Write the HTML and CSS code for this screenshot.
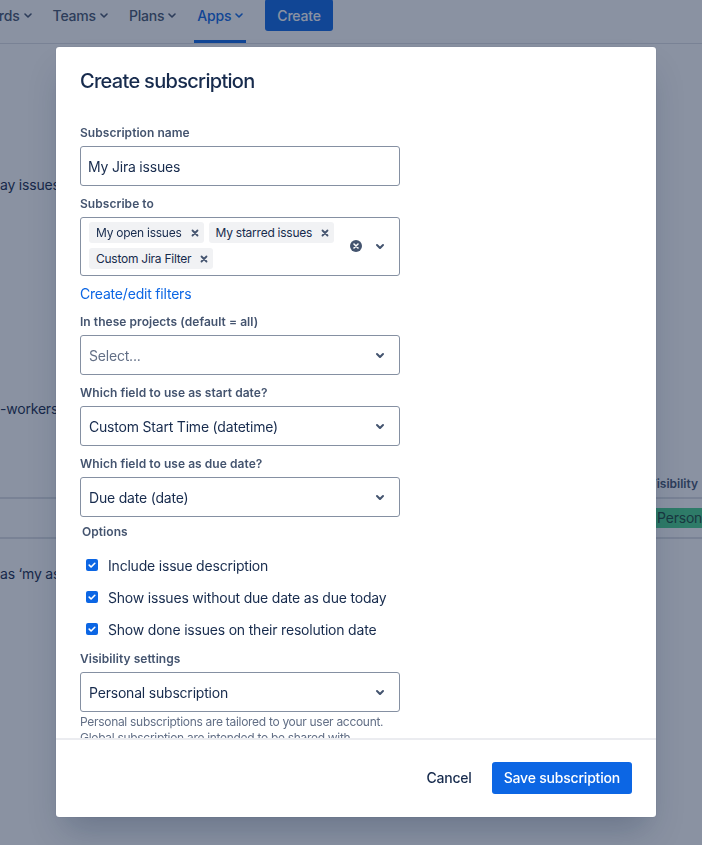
FILE: index.html
```html
<!DOCTYPE html>
<html lang="en">
<head>
<meta charset="utf-8">
<title>Calendar subscriptions</title>
<link rel="stylesheet" href="styles.css">
</head>
<body>
<div class="page">
  <header class="topnav">
    <nav class="nav-items">
      <a class="nav-item">Dashboards <svg class="nav-chev" viewBox="0 0 8 5" width="8" height="5"><path d="M1 1l3 3 3-3"/></svg></a>
      <a class="nav-item">Teams <svg class="nav-chev" viewBox="0 0 8 5" width="8" height="5"><path d="M1 1l3 3 3-3"/></svg></a>
      <a class="nav-item">Plans <svg class="nav-chev" viewBox="0 0 8 5" width="8" height="5"><path d="M1 1l3 3 3-3"/></svg></a>
      <a class="nav-item is-active">Apps <svg class="nav-chev" viewBox="0 0 8 5" width="8" height="5"><path d="M1 1l3 3 3-3"/></svg></a>
      <button class="create-btn" type="button">Create</button>
    </nav>
  </header>

  <main class="content">
    <p class="note note-1"><span class="lead">Get a daily digest of overdue and tod</span>ay issues</p>
    <p class="note note-2"><span class="lead">Share one calendar with your co</span>-workers</p>
    <div class="table">
      <div class="table-row table-head"><div></div><div class="th">Visibility</div></div>
      <div class="table-row table-body"><div></div><div><span class="lozenge">Personal</span></div></div>
    </div>
    <p class="note note-3"><span class="lead">Subscribe to issues you flagged</span>as ‘my assigned’</p>
  </main>
</div>

<div class="blanket"></div>

<section class="modal" role="dialog" aria-labelledby="modal-title">
  <header class="modal-header">
    <h1 class="modal-title" id="modal-title">Create subscription</h1>
  </header>

  <div class="modal-body">
    <form class="form">
      <div class="field">
        <label class="field-label" for="sub-name">Subscription name</label>
        <input class="textfield" id="sub-name" type="text" value="My Jira issues">
      </div>

      <div class="field">
        <div class="field-label">Subscribe to</div>
        <div class="multiselect">
          <div class="tags">
            <span class="tag"><span class="tag-text">My open issues</span><span class="tag-remove"><svg viewBox="0 0 8 8" width="8" height="8"><path d="M1.5 1.5l5 5M6.5 1.5l-5 5"/></svg></span></span>
            <span class="tag"><span class="tag-text">My starred issues</span><span class="tag-remove"><svg viewBox="0 0 8 8" width="8" height="8"><path d="M1.5 1.5l5 5M6.5 1.5l-5 5"/></svg></span></span>
            <span class="tag"><span class="tag-text">Custom Jira Filter</span><span class="tag-remove"><svg viewBox="0 0 8 8" width="8" height="8"><path d="M1.5 1.5l5 5M6.5 1.5l-5 5"/></svg></span></span>
          </div>
          <div class="indicators">
            <span class="indicator"><svg class="clear-icon" viewBox="0 0 12 12" width="12" height="12"><circle cx="6" cy="6" r="6"/><path d="M4 4l4 4M8 4l-4 4"/></svg></span>
            <span class="indicator"><svg class="chev" viewBox="0 0 24 24" width="24" height="24"><path d="M8.292 10.293a1.01 1.01 0 0 0 0 1.419l2.939 2.965c.218.215.5.322.779.322s.556-.107.769-.322l2.93-2.955a1.01 1.01 0 0 0 0-1.419.987.987 0 0 0-1.406 0l-2.298 2.317-2.307-2.327a.99.99 0 0 0-1.406 0z"/></svg></span>
          </div>
        </div>
      </div>

      <a class="link" href="#filters">Create/edit filters</a>

      <div class="field">
        <div class="field-label">In these projects (default = all)</div>
        <div class="select">
          <span class="select-value is-placeholder">Select...</span>
          <span class="indicator"><svg class="chev" viewBox="0 0 24 24" width="24" height="24"><path d="M8.292 10.293a1.01 1.01 0 0 0 0 1.419l2.939 2.965c.218.215.5.322.779.322s.556-.107.769-.322l2.93-2.955a1.01 1.01 0 0 0 0-1.419.987.987 0 0 0-1.406 0l-2.298 2.317-2.307-2.327a.99.99 0 0 0-1.406 0z"/></svg></span>
        </div>
      </div>

      <div class="field">
        <div class="field-label">Which field to use as start date?</div>
        <div class="select">
          <span class="select-value">Custom Start Time (datetime)</span>
          <span class="indicator"><svg class="chev" viewBox="0 0 24 24" width="24" height="24"><path d="M8.292 10.293a1.01 1.01 0 0 0 0 1.419l2.939 2.965c.218.215.5.322.779.322s.556-.107.769-.322l2.93-2.955a1.01 1.01 0 0 0 0-1.419.987.987 0 0 0-1.406 0l-2.298 2.317-2.307-2.327a.99.99 0 0 0-1.406 0z"/></svg></span>
        </div>
      </div>

      <div class="field">
        <div class="field-label">Which field to use as due date?</div>
        <div class="select">
          <span class="select-value">Due date (date)</span>
          <span class="indicator"><svg class="chev" viewBox="0 0 24 24" width="24" height="24"><path d="M8.292 10.293a1.01 1.01 0 0 0 0 1.419l2.939 2.965c.218.215.5.322.779.322s.556-.107.769-.322l2.93-2.955a1.01 1.01 0 0 0 0-1.419.987.987 0 0 0-1.406 0l-2.298 2.317-2.307-2.327a.99.99 0 0 0-1.406 0z"/></svg></span>
        </div>
      </div>

      <div class="options">
        <div class="field-label options-label">Options</div>
        <div class="check-row">
          <span class="check-icon"><svg viewBox="0 0 12 12" width="12" height="12"><rect width="12" height="12" rx="2"/><path d="M3.2 6.1l1.9 1.9 3.7-3.7"/></svg></span>
          <span class="check-text">Include issue description</span>
        </div>
        <div class="check-row">
          <span class="check-icon"><svg viewBox="0 0 12 12" width="12" height="12"><rect width="12" height="12" rx="2"/><path d="M3.2 6.1l1.9 1.9 3.7-3.7"/></svg></span>
          <span class="check-text">Show issues without due date as due today</span>
        </div>
        <div class="check-row">
          <span class="check-icon"><svg viewBox="0 0 12 12" width="12" height="12"><rect width="12" height="12" rx="2"/><path d="M3.2 6.1l1.9 1.9 3.7-3.7"/></svg></span>
          <span class="check-text">Show done issues on their resolution date</span>
        </div>
      </div>

      <div class="field field-visibility">
        <div class="field-label">Visibility settings</div>
        <div class="select">
          <span class="select-value">Personal subscription</span>
          <span class="indicator"><svg class="chev" viewBox="0 0 24 24" width="24" height="24"><path d="M8.292 10.293a1.01 1.01 0 0 0 0 1.419l2.939 2.965c.218.215.5.322.779.322s.556-.107.769-.322l2.93-2.955a1.01 1.01 0 0 0 0-1.419.987.987 0 0 0-1.406 0l-2.298 2.317-2.307-2.327a.99.99 0 0 0-1.406 0z"/></svg></span>
        </div>
        <p class="helper">Personal subscriptions are tailored to your user account. Global subscription are intended to be shared with collaborators.</p>
      </div>
    </form>
  </div>

  <footer class="modal-footer">
    <button class="btn btn-subtle" type="button">Cancel</button>
    <button class="btn btn-primary" type="button">Save subscription</button>
  </footer>
</section>
</body>
</html>
```

FILE: styles.css
```css
* { box-sizing: border-box; }

html, body { height: 100%; }

body {
  margin: 0;
  overflow: hidden;
  background: #fff;
  color: #172b4d;
  font-family: Inter, "Noto Sans", "Liberation Sans", sans-serif;
  font-size: 14px;
  letter-spacing: -0.2px;
}

/* ---------- page underneath the dialog ---------- */

.page { margin-top: -13px; }

.topnav {
  display: flex;
  height: 57px;
  border-bottom: 1px solid #dcdfe4;
}

.nav-items {
  display: flex;
  align-items: stretch;
  gap: 15px;
  margin-left: -62px;
}

.nav-item {
  display: flex;
  align-items: center;
  gap: 4px;
  padding: 0 3px;
  border-top: 3px solid transparent;
  border-bottom: 3px solid transparent;
  color: #44546f;
  font-weight: 500;
  text-decoration: none;
  white-space: nowrap;
}

.nav-item.is-active {
  color: #0c66e4;
  border-bottom-color: #0c66e4;
}

.nav-chev {
  fill: none;
  stroke: currentColor;
  stroke-width: 1.6;
  stroke-linecap: round;
  stroke-linejoin: round;
}

.create-btn {
  align-self: center;
  height: 32px;
  margin-left: 4px;
  padding: 0 12px;
  border: 0;
  border-radius: 3px;
  background: #0c66e4;
  color: #fff;
  font: 500 14px Inter, "Noto Sans", sans-serif;
  letter-spacing: -0.2px;
}

.note {
  display: flex;
  margin: 0;
  line-height: 20px;
  white-space: nowrap;
}

/* text before the visible part runs off the left edge */
.note .lead {
  display: flex;
  justify-content: flex-end;
  width: 0;
}

.note-1 { margin-top: 131px; }
.note-2 { margin-top: 204px; }
.note-3 { margin-top: 25px; }

.table { margin-top: 50px; }

.table-row {
  display: grid;
  grid-template-columns: 648px 1fr;
  align-items: center;
  border-bottom: 2px solid #dcdfe4;
}

.table-head {
  height: 30px;
  color: #44546f;
  font-size: 12px;
  font-weight: 600;
  letter-spacing: 0;
}

.table-body { height: 40px; }

.lozenge {
  display: inline-block;
  margin-left: 3px;
  padding: 0 6px;
  border-radius: 3px;
  background: #46d08a;
  color: #1c4a3a;
  line-height: 20px;
}

/* ---------- dialog ---------- */

.blanket {
  position: fixed;
  inset: 0;
  background: rgba(21, 38, 70, 0.5);
}

.modal {
  position: fixed;
  top: 47px;
  left: 56px;
  display: flex;
  flex-direction: column;
  width: 600px;
  height: 770px;
  border-radius: 3px;
  background: #fff;
  box-shadow: 0 0 1px rgba(9, 30, 66, 0.31), 0 20px 32px -8px rgba(9, 30, 66, 0.25);
}

.modal-header { padding: 22px 24px 0; }

.modal-title {
  margin: 0;
  color: #172b4d;
  font-size: 20px;
  font-weight: 500;
  line-height: 24px;
  letter-spacing: -0.7px;
}

.modal-body {
  flex: 1;
  overflow: hidden;
  padding: 32px 24px 0;
}

.form { width: 320px; }

.field + .field,
.link + .field { margin-top: 10px; }

.field-label {
  display: block;
  margin-bottom: 5px;
  color: #44546f;
  font-size: 12px;
  font-weight: 600;
  line-height: 16px;
  letter-spacing: 0.05px;
}

.textfield {
  display: block;
  width: 100%;
  height: 40px;
  padding: 0 7px;
  border: 1px solid #8590a2;
  border-radius: 3px;
  color: #172b4d;
  font: 400 14px Inter, "Noto Sans", sans-serif;
  letter-spacing: -0.2px;
  outline: none;
}

.multiselect {
  display: flex;
  align-items: center;
  padding: 4px 7px 6px 8px;
  border: 1px solid #8590a2;
  border-radius: 3px;
}

.tags {
  display: flex;
  flex: 1;
  flex-wrap: wrap;
  gap: 5px;
}

.tag {
  display: inline-flex;
  align-items: center;
  height: 21px;
  border-radius: 3px;
  background: #f1f2f4;
  color: #172b4d;
  font-size: 12px;
  letter-spacing: -0.25px;
}

.tag-text { padding: 0 4px 0 7px; }

.tag-remove {
  display: flex;
  align-items: center;
  justify-content: center;
  width: 18px;
  height: 21px;
}

.tag-remove svg {
  fill: none;
  stroke: #44546f;
  stroke-width: 1.8;
  stroke-linecap: round;
}

.indicators { display: flex; }

.indicator {
  display: flex;
  align-items: center;
  justify-content: center;
  width: 24px;
  height: 24px;
  color: #44546f;
}

.chev { fill: currentColor; }

.clear-icon circle { fill: #44546f; }

.clear-icon path {
  fill: none;
  stroke: #fff;
  stroke-width: 1.6;
  stroke-linecap: round;
}

.link {
  display: block;
  margin-top: 8px;
  color: #0c66e4;
  line-height: 20px;
  text-decoration: none;
}

.select {
  display: flex;
  align-items: center;
  height: 40px;
  padding: 0 7px 0 8px;
  border: 1px solid #8590a2;
  border-radius: 3px;
}

.select-value { flex: 1; }

.select-value.is-placeholder { color: #626f86; }

.options { margin-top: 7px; }

.options-label {
  margin-bottom: 9px;
  padding-left: 2px;
}

.check-row {
  display: flex;
  align-items: center;
  height: 32px;
}

.check-icon {
  display: flex;
  align-items: center;
  justify-content: center;
  width: 24px;
  height: 24px;
}

.check-icon rect { fill: #0c66e4; }

.check-icon path {
  fill: none;
  stroke: #fff;
  stroke-width: 1.6;
  stroke-linecap: round;
  stroke-linejoin: round;
}

.check-text { padding-left: 4px; }

.field-visibility { margin-top: 6px; }

.helper {
  margin: 2px 0 0;
  color: #626f86;
  font-size: 12px;
  line-height: 16px;
  letter-spacing: -0.3px;
}

.modal-footer {
  display: flex;
  justify-content: flex-end;
  gap: 8px;
  padding: 22px 24px 23px;
  border-top: 2px solid #ebecf0;
}

.btn {
  height: 32px;
  padding: 0 12px;
  border: 0;
  border-radius: 3px;
  font: 500 14px/32px Inter, "Noto Sans", sans-serif;
  letter-spacing: -0.2px;
}

.btn-subtle {
  background: transparent;
  color: #172b4d;
}

.btn-primary {
  background: #0c66e4;
  color: #fff;
}
```
